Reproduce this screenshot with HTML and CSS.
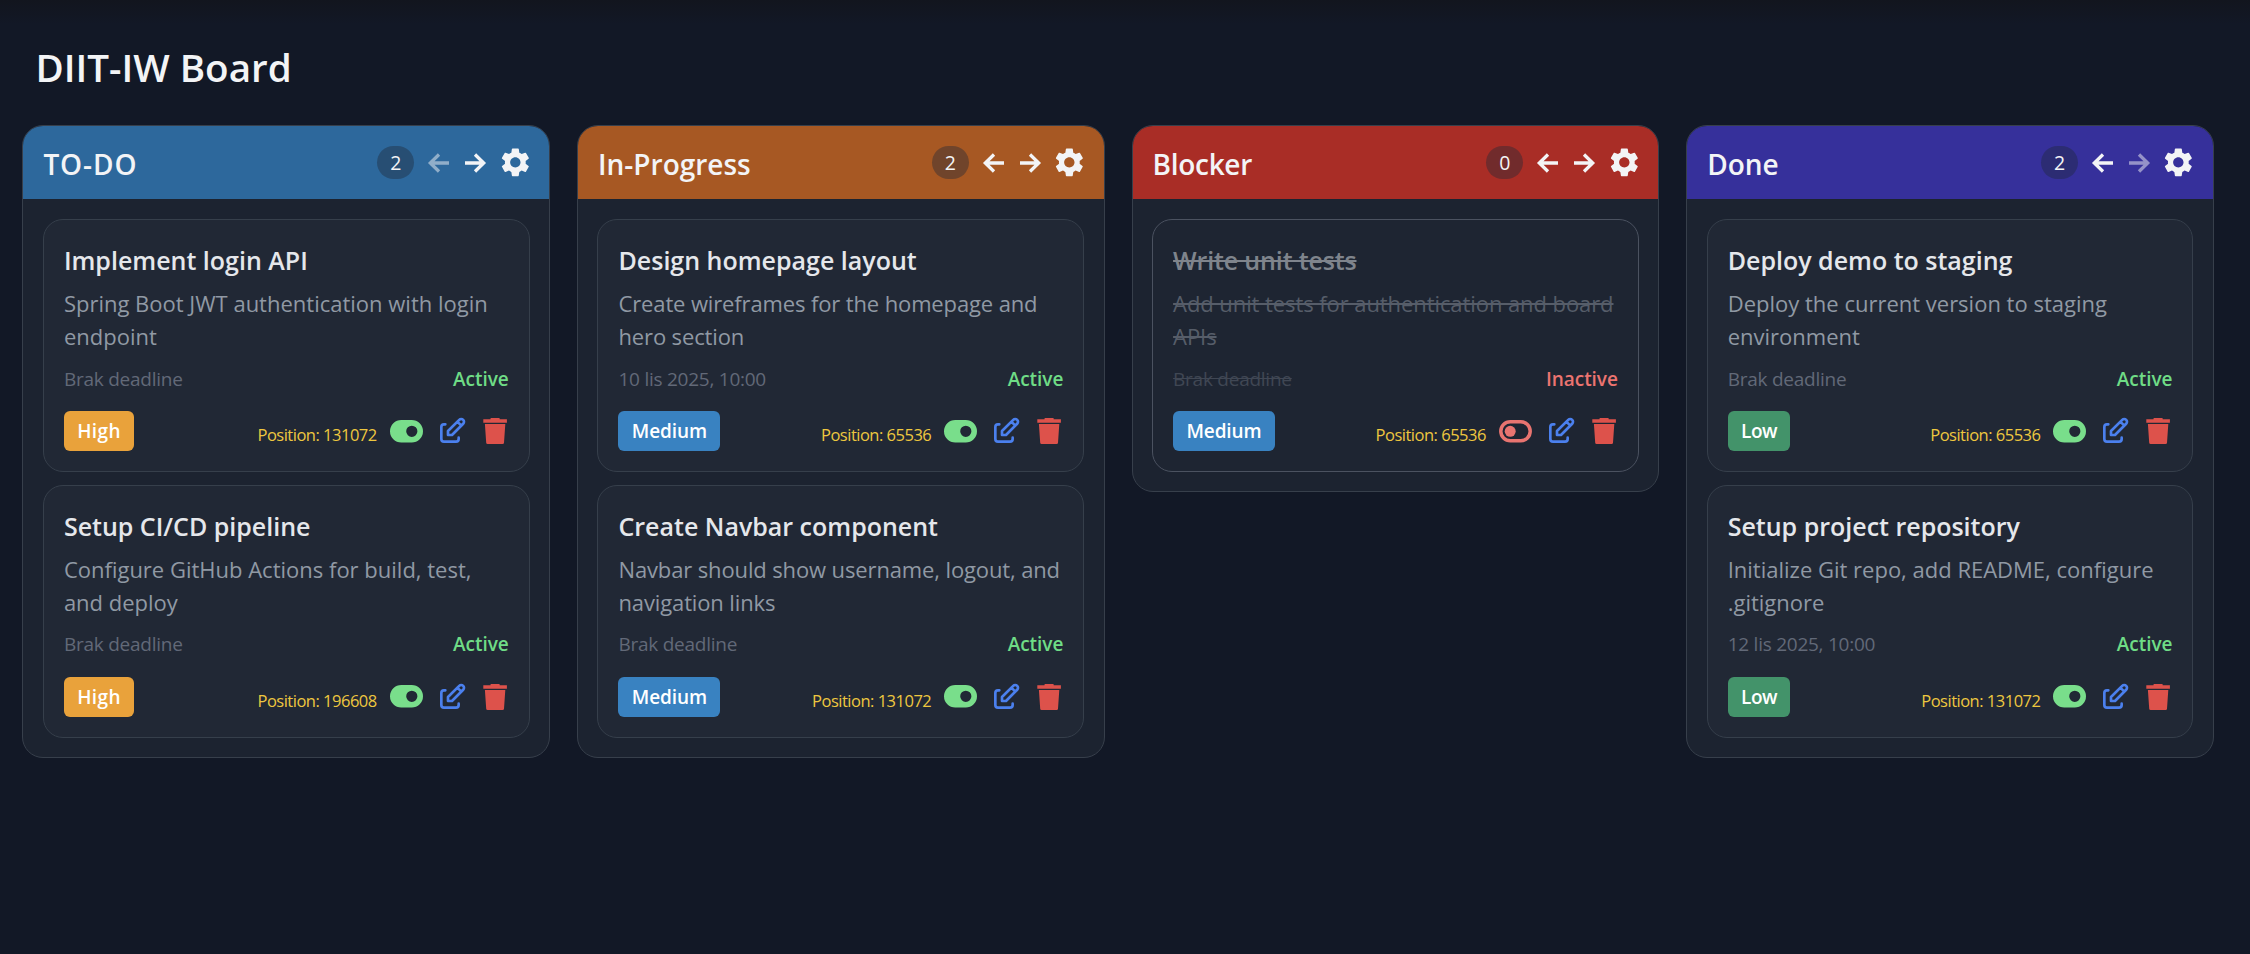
FILE: index.html
```html
<!DOCTYPE html>
<html lang="pl">
<head>
<meta charset="utf-8">
<title>DIIT-IW Board</title>
<link rel="stylesheet" href="styles.css">
</head>
<body>
<svg class="sprite" aria-hidden="true">
  <symbol id="left" viewBox="0 0 28 28"><path d="M24 14H6M14 5.5L5.3 14l8.7 8.5" fill="none" stroke="currentColor" stroke-width="3.3"/></symbol>
  <symbol id="right" viewBox="0 0 28 28"><path d="M4 14h18M14 5.5l8.7 8.5-8.7 8.5" fill="none" stroke="currentColor" stroke-width="3.3"/></symbol>
  <symbol id="gear" viewBox="0 0 24 24"><path fill="currentColor" d="M19.14 12.94c.04-.3.06-.61.06-.94 0-.32-.02-.64-.07-.94l2.03-1.58a.49.49 0 0 0 .12-.61l-1.92-3.32a.488.488 0 0 0-.59-.22l-2.39.96c-.5-.38-1.03-.7-1.62-.94l-.36-2.54a.484.484 0 0 0-.48-.41h-3.84c-.24 0-.43.17-.47.41l-.36 2.54c-.59.24-1.13.57-1.62.94l-2.39-.96c-.22-.08-.47 0-.59.22L2.74 8.87c-.12.21-.08.47.12.61l2.03 1.58c-.05.3-.09.63-.09.94s.02.64.07.94l-2.03 1.58a.49.49 0 0 0-.12.61l1.92 3.32c.12.22.37.29.59.22l2.39-.96c.5.38 1.03.7 1.62.94l.36 2.54c.05.24.24.41.48.41h3.84c.24 0 .44-.17.47-.41l.36-2.54c.59-.24 1.13-.56 1.62-.94l2.39.96c.22.08.47 0 .59-.22l1.92-3.32c.12-.22.07-.47-.12-.61l-2.01-1.58zM12 15.6c-1.98 0-3.6-1.62-3.6-3.6s1.62-3.6 3.6-3.6 3.6 1.62 3.6 3.6-1.62 3.6-3.6 3.6z"/></symbol>
  <symbol id="on" viewBox="0 0 33 23"><path fill="currentColor" fill-rule="evenodd" d="M11.3 0h10.4a11.3 11.3 0 0 1 0 22.6H11.3a11.3 11.3 0 0 1 0-22.6zM21.8 5.7a5.6 5.6 0 1 0 0 11.2 5.6 5.6 0 0 0 0-11.2z"/></symbol>
  <symbol id="off" viewBox="0 0 33 23"><rect x="1.8" y="1.8" width="29.4" height="19" rx="9.5" fill="none" stroke="currentColor" stroke-width="3.5"/><circle cx="11.2" cy="11.3" r="5.5" fill="currentColor"/></symbol>
  <symbol id="edit" viewBox="0 0 24 24"><path fill="none" stroke="currentColor" stroke-width="2" stroke-linecap="round" stroke-linejoin="round" d="M7 7H6a2 2 0 0 0-2 2v9a2 2 0 0 0 2 2h9a2 2 0 0 0 2-2v-1M20.385 6.585a2.1 2.1 0 0 0-2.97-2.97L9 12v3h3l8.385-8.415zM16 5l3 3"/></symbol>
  <symbol id="trash" viewBox="0 0 28 28"><path fill="currentColor" d="M2.3 2.3h7.2V1.6q0-.6.6-.6h8q.6 0 .6.6v.7h7.2v3.5H2.3zM3.9 6.9h20.4L23 25.700q-.1 1.300-1.400 1.300H6.600q-1.300 0-1.400-1.300z"/></symbol>
</svg>

<main class="page">
  <h1 class="page-title">DIIT-IW Board</h1>
  <div class="board">

    <section class="column">
      <header class="column-head todo">
        <h2 class="column-title">TO-DO</h2>
        <span class="count">2</span>
        <svg class="arrow disabled"><use href="#left"/></svg>
        <svg class="arrow"><use href="#right"/></svg>
        <svg class="gear"><use href="#gear"/></svg>
      </header>
      <div class="cards">
        <article class="card">
          <h3 class="card-title">Implement login API</h3>
          <p class="desc">Spring Boot JWT authentication with login<br>endpoint</p>
          <div class="meta"><span class="deadline">Brak deadline</span><span class="status">Active</span></div>
          <div class="actions"><span class="badge high">High</span><span class="position">Position: 131072</span><svg class="toggle"><use href="#on"/></svg><svg class="edit"><use href="#edit"/></svg><svg class="trash"><use href="#trash"/></svg></div>
        </article>
        <article class="card">
          <h3 class="card-title">Setup CI/CD pipeline</h3>
          <p class="desc">Configure GitHub Actions for build, test,<br>and deploy</p>
          <div class="meta"><span class="deadline">Brak deadline</span><span class="status">Active</span></div>
          <div class="actions"><span class="badge high">High</span><span class="position">Position: 196608</span><svg class="toggle"><use href="#on"/></svg><svg class="edit"><use href="#edit"/></svg><svg class="trash"><use href="#trash"/></svg></div>
        </article>
      </div>
    </section>

    <section class="column">
      <header class="column-head progress">
        <h2 class="column-title">In-Progress</h2>
        <span class="count">2</span>
        <svg class="arrow"><use href="#left"/></svg>
        <svg class="arrow"><use href="#right"/></svg>
        <svg class="gear"><use href="#gear"/></svg>
      </header>
      <div class="cards">
        <article class="card">
          <h3 class="card-title">Design homepage layout</h3>
          <p class="desc tight">Create wireframes for the homepage and<br>hero section</p>
          <div class="meta"><span class="deadline">10 lis 2025, 10:00</span><span class="status">Active</span></div>
          <div class="actions"><span class="badge medium">Medium</span><span class="position">Position: 65536</span><svg class="toggle"><use href="#on"/></svg><svg class="edit"><use href="#edit"/></svg><svg class="trash"><use href="#trash"/></svg></div>
        </article>
        <article class="card">
          <h3 class="card-title">Create Navbar component</h3>
          <p class="desc tight">Navbar should show username, logout, and<br>navigation links</p>
          <div class="meta"><span class="deadline">Brak deadline</span><span class="status">Active</span></div>
          <div class="actions"><span class="badge medium">Medium</span><span class="position">Position: 131072</span><svg class="toggle"><use href="#on"/></svg><svg class="edit"><use href="#edit"/></svg><svg class="trash"><use href="#trash"/></svg></div>
        </article>
      </div>
    </section>

    <section class="column">
      <header class="column-head blocker">
        <h2 class="column-title">Blocker</h2>
        <span class="count">0</span>
        <svg class="arrow"><use href="#left"/></svg>
        <svg class="arrow"><use href="#right"/></svg>
        <svg class="gear"><use href="#gear"/></svg>
      </header>
      <div class="cards">
        <article class="card inactive">
          <h3 class="card-title">Write unit tests</h3>
          <p class="desc">Add unit tests for authentication and board<br>APIs</p>
          <div class="meta"><span class="deadline">Brak deadline</span><span class="status">Inactive</span></div>
          <div class="actions"><span class="badge medium">Medium</span><span class="position">Position: 65536</span><svg class="toggle"><use href="#off"/></svg><svg class="edit"><use href="#edit"/></svg><svg class="trash"><use href="#trash"/></svg></div>
        </article>
      </div>
    </section>

    <section class="column">
      <header class="column-head done">
        <h2 class="column-title">Done</h2>
        <span class="count">2</span>
        <svg class="arrow"><use href="#left"/></svg>
        <svg class="arrow disabled"><use href="#right"/></svg>
        <svg class="gear"><use href="#gear"/></svg>
      </header>
      <div class="cards">
        <article class="card">
          <h3 class="card-title">Deploy demo to staging</h3>
          <p class="desc">Deploy the current version to staging<br>environment</p>
          <div class="meta"><span class="deadline">Brak deadline</span><span class="status">Active</span></div>
          <div class="actions"><span class="badge low">Low</span><span class="position">Position: 65536</span><svg class="toggle"><use href="#on"/></svg><svg class="edit"><use href="#edit"/></svg><svg class="trash"><use href="#trash"/></svg></div>
        </article>
        <article class="card">
          <h3 class="card-title">Setup project repository</h3>
          <p class="desc">Initialize Git repo, add README, configure<br>.gitignore</p>
          <div class="meta"><span class="deadline">12 lis 2025, 10:00</span><span class="status">Active</span></div>
          <div class="actions"><span class="badge low">Low</span><span class="position">Position: 131072</span><svg class="toggle"><use href="#on"/></svg><svg class="edit"><use href="#edit"/></svg><svg class="trash"><use href="#trash"/></svg></div>
        </article>
      </div>
    </section>

  </div>
</main>
</body>
</html>
```
FILE: styles.css
```css
* { box-sizing: border-box; margin: 0; }

body {
  background: #121826;
  color: #f3f4f6;
  font-family: "Segoe UI", "Open Sans", "Noto Sans", sans-serif;
  overflow: hidden;
}

.sprite { display: none; }
svg { flex: none; }

.page {
  height: 954px;
  padding: 43px 22.4px 0;
  background: linear-gradient(#12151e, #121826 24px);
}

.page-title {
  padding-left: 13px;
  font-size: 38.6px;
  line-height: 48px;
  font-weight: 600;
}

.board {
  display: grid;
  grid-template-columns: repeat(4, 527.8px);
  gap: 26.8px;
  align-items: start;
  margin-top: 34px;
}

.column {
  border: 1px solid #373f4b;
  border-radius: 21px;
  background: #1c2330;
  overflow: hidden;
}

.column-head {
  display: flex;
  align-items: center;
  height: 73px;
  padding: 0 17px 0 20px;
}
.todo { background: #2d689c; }
.progress { background: #a75823; }
.blocker { background: #a92d26; }
.done { background: #36309b; }

.column-title {
  flex: 1;
  padding-top: 2px;
  font-size: 28px;
  line-height: 40px;
  font-weight: 600;
}
.todo .column-title { letter-spacing: .9px; }
.blocker .column-title { letter-spacing: -.3px; }

.count {
  width: 37px;
  height: 33.5px;
  margin-right: 10.7px;
  border-radius: 17px;
  background: rgba(31, 41, 55, .4);
  font-size: 19.5px;
  line-height: 33.5px;
  text-align: center;
}

.arrow { width: 28px; height: 28px; margin-right: 8.3px; }
.arrow.disabled { opacity: .5; }
.gear { width: 34.67px; height: 34.67px; }

.cards {
  display: grid;
  grid-template-columns: minmax(0, 1fr);
  gap: 13.33px;
  padding: 20px 19.5px 19px;
}

.card {
  height: 252.67px;
  padding: 20px;
  border: 1px solid #363f4b;
  border-radius: 20px;
  background: #212835;
}

.card-title {
  color: #e5e7eb;
  font-size: 25px;
  line-height: 40px;
  font-weight: 640;
}

.desc {
  margin-top: 7px;
  color: #9099a4;
  font-size: 22px;
  line-height: 33px;
  white-space: nowrap;
}
.desc.tight { letter-spacing: -.13px; }

.meta {
  display: flex;
  justify-content: space-between;
  margin-top: 11.5px;
  font-size: 19px;
  line-height: 28px;
}
.deadline { color: #626978; letter-spacing: -.25px; }
.status { color: #6fdc86; font-weight: 600; letter-spacing: -.05px; }

.actions {
  display: flex;
  align-items: center;
  gap: 13px;
  height: 40px;
  margin-top: 18.5px;
}

.badge {
  padding: 1px 13.3px 0;
  border-radius: 6px;
  color: #fff;
  font-size: 19px;
  font-weight: 620;
  line-height: 39px;
}
.high { background: #e9a23b; letter-spacing: .4px; }
.medium { background: #3982c1; letter-spacing: -.1px; }
.low { background: #43936a; letter-spacing: -.4px; }

.position {
  margin-left: auto;
  padding-top: 8px;
  color: #eec73f;
  font-size: 16.5px;
  line-height: 24px;
  letter-spacing: -.5px;
}

.toggle { width: 33px; height: 23px; color: #79de8b; }
.edit { width: 32px; height: 32px; color: #4b80ee; }
.trash { width: 28px; height: 28px; color: #dd524b; }

.inactive { background: #1e2532; border-color: #4b5260; }
.inactive .card-title { color: #7f848c; text-decoration: line-through; letter-spacing: -.15px; }
.inactive .desc { color: #565d69; text-decoration: line-through; letter-spacing: -.08px; }
.inactive .deadline { color: #404754; text-decoration: line-through; }
.inactive .status { color: #ec7470; }
.inactive .toggle { color: #e87470; }
```
